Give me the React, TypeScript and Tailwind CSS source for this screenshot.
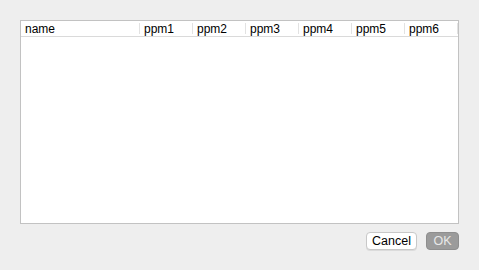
const columns = ['ppm1', 'ppm2', 'ppm3', 'ppm4', 'ppm5', 'ppm6'];

export default function App() {
  return (
    <div className="w-[479px] h-[270px] bg-[#eeeeee] px-5 pt-5 font-['Liberation_Sans',Arial,sans-serif] text-[12px] text-black">
      {/* Table */}
      <div className="h-[204px] w-[439px] bg-white border border-[#c2c2c2]">
        <div className="flex h-4 items-center border-b border-[#dadada]">
          <div className="w-[119px] h-[11px] flex items-center pl-1 border-r border-[#e2e2e2]">
            name
          </div>
          {columns.map((c) => (
            <div key={c} className="w-[53px] h-[11px] flex items-center pl-1 border-r border-[#e2e2e2]">
              {c}
            </div>
          ))}
        </div>
      </div>

      {/* Buttons */}
      <div className="flex justify-end gap-[9px] mt-2">
        <button className="h-[18px] w-[51px] rounded-[4px] bg-white border border-[#c8c8c8] text-[12.5px] leading-none shadow-[0_1px_0_rgba(0,0,0,0.08)]">
          Cancel
        </button>
        <button className="h-[18px] w-[33px] rounded-[4px] bg-[#9b9b9b] border border-[#8e8e8e] text-[12.5px] leading-none text-[#e8e8e8]">
          OK
        </button>
      </div>
    </div>
  );
}
